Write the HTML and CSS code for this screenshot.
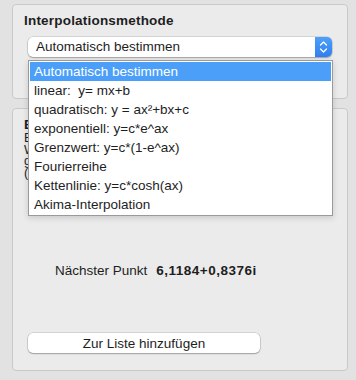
FILE: index.html
```html
<!DOCTYPE html>
<html>
<head>
<meta charset="utf-8">
<link rel="stylesheet" href="styles.css">
</head>
<body>
<div class="window">
  <section class="panel panel-top">
    <div class="title">Interpolationsmethode</div>
    <div class="select">
      <span class="select-text">Automatisch bestimmen</span>
      <span class="stepper">
        <svg width="9" height="14" viewBox="0 0 9 14"><path d="M1.5 5 L4.5 2 L7.5 5 M1.5 9 L4.5 12 L7.5 9" fill="none" stroke="#fff" stroke-width="1.3" stroke-linecap="round" stroke-linejoin="round"/></svg>
      </span>
    </div>
  </section>
  <section class="panel panel-bottom">
    <div class="info">
      <div class="info-title">Ergebnis</div>
      <div class="info-line">Berechnet wird der Punkt</div>
      <div class="info-line">Wert auf der Kurve</div>
      <div class="info-line">gemäß Methode</div>
      <div class="info-line">(komplex)</div>
    </div>
    <div class="result">
      <span class="result-label">Nächster Punkt</span>
      <span class="result-value">6,1184+0,8376i</span>
    </div>
    <button class="btn">Zur Liste hinzufügen</button>
  </section>
  <ul class="menu">
    <li class="menu-item active">Automatisch bestimmen</li>
    <li class="menu-item">linear:&nbsp; y= mx+b</li>
    <li class="menu-item">quadratisch: y = ax²+bx+c</li>
    <li class="menu-item">exponentiell: y=c*e^ax</li>
    <li class="menu-item">Grenzwert: y=c*(1-e^ax)</li>
    <li class="menu-item">Fourierreihe</li>
    <li class="menu-item">Kettenlinie: y=c*cosh(ax)</li>
    <li class="menu-item">Akima-Interpolation</li>
  </ul>
</div>
</body>
</html>
```
FILE: styles.css
```css
html, body {
  margin: 0;
  padding: 0;
  background: #e2e2e2;
}
body {
  font-family: "Liberation Sans", Arial, sans-serif;
  font-size: 13.5px;
  color: #1e1e1e;
  width: 356px;
  height: 380px;
  overflow: hidden;
}
.window {
  position: relative;
  padding: 4px 8px 0 12px;
  display: flex;
  flex-direction: column;
  gap: 9px;
}
.panel {
  box-sizing: border-box;
  width: 336px;
  background: #ebebeb;
  border: 1px solid #c9c9c9;
  border-radius: 4px;
}
.panel-top {
  height: 95px;
  padding: 8px 15px 0 15px;
}
.title {
  font-weight: bold;
  line-height: 16px;
  margin-left: -4px;
  letter-spacing: 0.2px;
}
.select {
  margin-top: 8px;
  height: 20px;
  width: 304px;
  box-sizing: border-box;
  background: #fff;
  border-radius: 5px;
  box-shadow: 0 0 0 0.5px rgba(0,0,0,0.18), 0 1px 1.5px rgba(0,0,0,0.25);
  display: flex;
  align-items: center;
  overflow: hidden;
}
.select-text {
  flex: 1;
  padding-left: 8px;
  line-height: 20px;
  white-space: nowrap;
}
.stepper {
  width: 17px;
  height: 20px;
  background: linear-gradient(#4f9ff9, #2f7ff0);
  display: flex;
  align-items: center;
  justify-content: center;
}
.panel-bottom {
  height: 263px;
  padding: 9px 15px 17px 15px;
  display: flex;
  flex-direction: column;
}
.info {
  margin-left: -4px;
  font-size: 12.5px;
  line-height: 11.5px;
}
.info-title {
  font-weight: bold;
  font-size: 13.5px;
  line-height: 14px;
  margin-bottom: 1px;
}
.result {
  margin-top: 84px;
  margin-left: 27px;
  display: flex;
  gap: 9px;
  align-items: baseline;
}
.result-value {
  font-weight: bold;
  letter-spacing: 0.5px;
}
.btn {
  margin-top: auto;
  width: 232px;
  height: 20px;
  padding: 0;
  font-family: inherit;
  font-size: 13.5px;
  color: #1e1e1e;
  background: #fff;
  border: none;
  border-radius: 5px;
  box-shadow: 0 0 0 0.5px rgba(0,0,0,0.2), 0 1px 1.5px rgba(0,0,0,0.25);
}
.menu {
  position: absolute;
  left: 28px;
  top: 60px;
  width: 305px;
  box-sizing: border-box;
  margin: 0;
  padding: 1px;
  list-style: none;
  background: #fff;
  border: 1px solid #9a9a9a;
  box-shadow: 0 2px 6px rgba(0,0,0,0.15);
}
.menu-item {
  height: 19px;
  line-height: 19px;
  padding-left: 4px;
  white-space: nowrap;
}
.menu-item.active {
  background: #4b9ff8;
  color: #fff;
}
```
